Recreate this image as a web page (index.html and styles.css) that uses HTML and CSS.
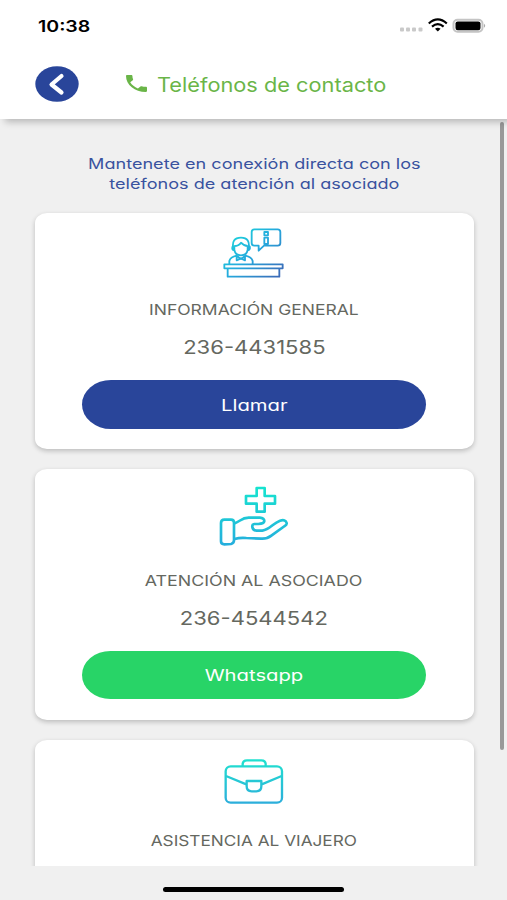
FILE: index.html
```html
<!DOCTYPE html>
<html lang="es">
<head>
<meta charset="utf-8">
<title>Teléfonos de contacto</title>
<link rel="stylesheet" href="styles.css">
</head>
<body>
<div class="screen">
  <header class="header">
    <div class="status">
      <span class="time"><span class="wide">10:38</span></span>
      <svg class="status-icons" viewBox="0 0 90 20">
        <g fill="#c9c9c9"><rect x="1" y="10.500" width="4" height="4" rx="1"/><rect x="7" y="10.500" width="4" height="4" rx="1"/><rect x="13" y="10.500" width="4" height="4" rx="1"/><rect x="19.500" y="10.500" width="4" height="4" rx="1"/></g>
        <g fill="none" stroke="#000" stroke-width="2.200"><path d="M29.800 6.500Q38.800-1.700 47.800 6.500"/><path d="M33 9.600Q38.800 4.600 44.600 9.600"/></g>
        <path d="M36 11.800Q38.800 9.900 41.600 11.800L38.800 14.600Z"/>
        <rect x="54.500" y="2.800" width="29" height="12" rx="4" fill="#fff" stroke="#c4c4c4" stroke-width="2"/>
        <rect x="56.500" y="4.400" width="25" height="8.800" rx="2.200"/>
        <path d="M85 6.800q2.400 2 0 4z" fill="#aaa"/>
      </svg>
    </div>
    <div class="bar">
      <svg class="back" viewBox="0 0 44 36"><ellipse cx="22" cy="18" rx="21.700" ry="17.800" fill="#29459a"/><path d="M26.500 10L16.500 18.500L26.500 26.500" fill="none" stroke="#fff" stroke-width="4.200" stroke-linecap="round" stroke-linejoin="round"/></svg>
      <svg class="phone-icon" viewBox="3 3 18 18" preserveAspectRatio="none"><path fill="#6ab548" d="M6.620 10.790c1.440 2.830 3.760 5.140 6.590 6.590l2.200-2.200c.270-.270.670-.360 1.020-.240 1.120.370 2.330.570 3.570.570.550 0 1 .450 1 1V20c0 .550-.450 1-1 1C10.610 21 3 13.390 3 4c0-.550.450-1 1-1h3.500c.550 0 1 .450 1 1 0 1.250.200 2.450.570 3.570.110.350.030.740-.250 1.020z"/></svg>
      <h1 class="title"><span class="wide">Teléfonos de contacto</span></h1>
    </div>
  </header>
  <main class="content">
    <p class="intro"><span class="wide">Mantenete en conexión directa con los</span><span class="wide second">teléfonos de atención al asociado</span></p>
    <section class="card">
      <svg class="icon" viewBox="-3 0 270 195">
        <defs><linearGradient id="a" gradientUnits="userSpaceOnUse" x1="55" y1="20" x2="205" y2="175"><stop stop-color="#18e0da"/><stop offset=".5" stop-color="#25a9dd"/><stop offset="1" stop-color="#3d69b7"/></linearGradient></defs>
        <g fill="none" stroke="url(#a)" stroke-width="5.500" stroke-linejoin="round">
          <path d="M133 28H203Q211 28 211 36V69Q211 77 203 77H162L146 92V77H133Q125 77 125 69V36Q125 28 133 28Z"/>
          <rect x="163" y="36" width="11" height="10"/><rect x="163" y="53" width="11" height="19"/>
          <path d="M43 133H218V145H43ZM53 145V170H208V145"/>
          <path d="M70 88Q63 53 93 53Q122 53 116 88M73 78Q86 78 93 68Q102 78 113 78M73 78V90Q76 106 93 106Q110 106 113 90V78M73 79H68Q64 90 73 91M113 79H119Q122 90 113 91"/>
          <path d="M58 133V123Q61 111 80 107L93 117L106 107Q125 111 128 123V133M80 107V121L93 115L105 121V107"/>
        </g>
      </svg>
      <h2 class="label l-info"><span class="wide">INFORMACIÓN GENERAL</span></h2>
      <p class="number"><span class="wide">236-4431585</span></p>
      <a class="button call"><span class="wide">Llamar</span></a>
    </section>
    <section class="card member">
      <svg class="icon" viewBox="-3 0 270 210">
        <defs><linearGradient id="b" gradientUnits="userSpaceOnUse" x1="0" y1="20" x2="0" y2="195"><stop stop-color="#16e4cf"/><stop offset="1" stop-color="#25aedd"/></linearGradient></defs>
        <g fill="none" stroke="url(#b)" stroke-width="8" stroke-linejoin="round" stroke-linecap="round">
          <path d="M140 24H164V48H195V71H164V95H140V71H108V48H140Z"/>
          <path d="M43 119H63Q72 119 72 128V181Q72 190 63 192L43 193Q33 193 33 184V129Q33 119 43 119Z"/>
          <path d="M73 130C89 126 94 113 116 113H149Q163 115 163 123Q162 131 145 132H133Q126 133 127 141Q128 151 140 152H157C180 149 188 130 210 122Q227 117 230 129Q231 134 224 138L184 167Q171 177 154 176L109 174Q91 172 73 177"/>
        </g>
      </svg>
      <h2 class="label l-member"><span class="wide">ATENCIÓN AL ASOCIADO</span></h2>
      <p class="number"><span class="wide">236-4544542</span></p>
      <a class="button whatsapp"><span class="wide">Whatsapp</span></a>
    </section>
    <section class="card travel">
      <svg class="icon" viewBox="-3 0 270 195">
        <defs><linearGradient id="c" gradientUnits="userSpaceOnUse" x1="0" y1="28" x2="0" y2="160"><stop stop-color="#20e1cf"/><stop offset="1" stop-color="#2caedb"/></linearGradient></defs>
        <g fill="none" stroke="url(#c)" stroke-width="7" stroke-linejoin="round">
          <path d="M98 49V43Q98 31 111 31H154Q167 31 167 43V49"/>
          <rect x="47" y="49" width="169" height="109" rx="15"/>
          <path d="M48 78L109 103M155 103L215 78M110 93H154V109Q154 124 139 124H125Q110 124 110 109Z"/>
        </g>
      </svg>
      <h2 class="label l-travel"><span class="wide">ASISTENCIA AL VIAJERO</span></h2>
    </section>
    <div class="scrollbar"></div>
  </main>
  <footer class="footer"><div class="home"></div></footer>
</div>
</body>
</html>
```
FILE: styles.css
```css
* { box-sizing: border-box; margin: 0; padding: 0; }
body { background: #f0f0f0; font-family: Inter, "Liberation Sans", sans-serif; }
.screen { width: 507px; height: 900px; display: flex; flex-direction: column; overflow: hidden; }
.wide { display: inline-block; white-space: nowrap; transform: scaleX(1.2); transform-origin: center; }
.header { height: 119px; background: #fff; box-shadow: 5px 3px 7px rgba(0,0,0,.24); z-index: 2; flex: none; }
.status { height: 52px; display: flex; justify-content: space-between; padding: 16px 18px 0 38px; }
.time { font-size: 16px; line-height: 20px; font-weight: 600; }
.time .wide { transform-origin: left; transform: scaleX(1.22); }
.status-icons { width: 90px; height: 20px; margin-top: 1px; }
.bar { height: 64px; display: flex; align-items: center; padding-left: 35px; }
.back { width: 44px; height: 36px; }
.phone-icon { width: 21px; height: 17px; margin-left: 46.500px; margin-bottom: 1px; }
.title { font-size: 19.500px; line-height: 28px; font-weight: 400; color: #6ab548; margin-left: 10px; padding-top: 1px; }
.title .wide { transform-origin: left; transform: scaleX(1.116); }
.content { height: 747px; overflow: hidden; position: relative; padding: 35px 33.500px 0 34.500px; flex: none; }
.intro { display: flex; flex-direction: column; align-items: center; height: 59px; font-size: 14.500px; line-height: 20px; color: #3a539f; font-feature-settings: "cv11"; }
.intro .wide { transform: scaleX(1.247); }
.card { height: 236px; background: #fff; border-radius: 12px / 10px; box-shadow: 0 2px 5px rgba(0,0,0,.22); padding-top: 7px; margin-bottom: 20px; display: flex; flex-direction: column; align-items: center; font-feature-settings: "cv11"; }
.icon { width: 90px; height: 65px; flex: none; }
.label { height: 20px; margin-top: 15px; font-size: 15px; line-height: 20px; font-weight: 400; color: #65685f; }
.l-info .wide { transform: scaleX(1.167); }
.l-member .wide { transform: scaleX(1.188); }
.l-travel .wide { transform: scaleX(1.148); }
.number { height: 24px; margin-top: 16px; font-size: 19px; line-height: 24px; color: #65685f; }
.number .wide { transform: scaleX(1.16); }
.button { width: 344.500px; height: 49px; margin-top: 20px; border-radius: 29px / 24.500px; display: flex; align-items: center; justify-content: center; color: #fff; font-size: 16px; }
.button .wide { transform: scaleX(1.265); }
.call { background: #29459a; }
.whatsapp { background: #28d467; }
.member { height: 250.500px; padding-top: 11px; }
.member .icon { height: 70px; }
.member .label { margin-top: 20.500px; }
.member .button { height: 48.500px; }
.travel { height: 250px; padding-top: 10.500px; }
.travel .label { margin-top: 16px; }
.scrollbar { position: absolute; right: 3.500px; top: 3px; width: 4px; height: 628px; border-radius: 2px; background: #999; }
.footer { flex: 1; padding-top: 21px; display: flex; justify-content: center; }
.home { width: 181px; height: 5px; border-radius: 3px; background: #000; }
```
